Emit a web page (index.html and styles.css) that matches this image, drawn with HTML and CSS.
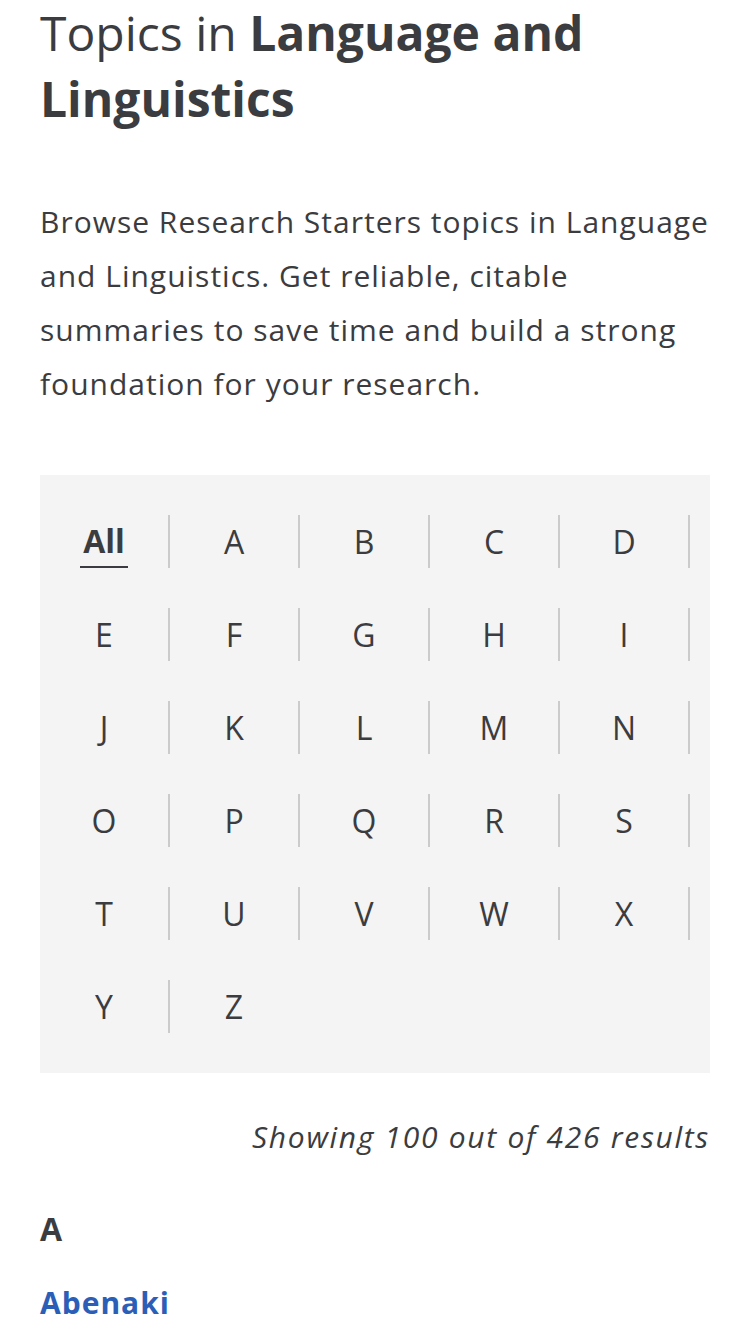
FILE: index.html
```html
<!DOCTYPE html>
<html lang="en">

<head>
    <meta charset="UTF-8">
    <meta name="viewport" content="width=device-width, initial-scale=1.0">
    <title>Topics in Language and Linguistics | Research Starters</title>
    <link rel="stylesheet" href="styles.css">
</head>

<body>
    <div class="container">
        <h1 class="title">Topics in <b>Language and Linguistics</b></h1>

        <p class="intro">Browse Research Starters topics in Language and Linguistics. Get reliable, citable summaries to save time and build a strong foundation for your research.</p>

        <ul class="letters">
            <li><a href="#" class="active">All</a></li>
            <li><a href="#">A</a></li>
            <li><a href="#">B</a></li>
            <li><a href="#">C</a></li>
            <li><a href="#">D</a></li>
            <li><a href="#">E</a></li>
            <li><a href="#">F</a></li>
            <li><a href="#">G</a></li>
            <li><a href="#">H</a></li>
            <li><a href="#">I</a></li>
            <li><a href="#">J</a></li>
            <li><a href="#">K</a></li>
            <li><a href="#">L</a></li>
            <li><a href="#">M</a></li>
            <li><a href="#">N</a></li>
            <li><a href="#">O</a></li>
            <li><a href="#">P</a></li>
            <li><a href="#">Q</a></li>
            <li><a href="#">R</a></li>
            <li><a href="#">S</a></li>
            <li><a href="#">T</a></li>
            <li><a href="#">U</a></li>
            <li><a href="#">V</a></li>
            <li><a href="#">W</a></li>
            <li><a href="#">X</a></li>
            <li><a href="#">Y</a></li>
            <li><a href="#">Z</a></li>
        </ul>

        <p class="count">Showing 100 out of 426 results</p>

        <div class="group">
            <h2>A</h2>
            <a href="#" class="topic">Abenaki</a>
        </div>
    </div>
</body>

</html>
```

FILE: styles.css
```css
body {
    margin: 0;
    background: #fff;
    color: #3b3c40;
    font-family: "Open Sans", "Liberation Sans", sans-serif;
}

.container {
    padding: 0 40px;
}

.title {
    margin: 0;
    font-size: 48px;
    line-height: 66px;
    font-weight: 400;
}

.title b {
    font-weight: 700;
}

.intro {
    margin: 63px 0 0;
    font-size: 30px;
    line-height: 54px;
    letter-spacing: 1px;
}

.letters {
    list-style: none;
    display: grid;
    grid-template-columns: repeat(5, 130px);
    row-gap: 40px;
    margin: 64px 0 0;
    padding: 40px 0;
    background: #f4f4f4;
}

.letters li {
    display: flex;
    justify-content: center;
    height: 53px;
    border-right: 2px solid #cbcbcb;
}

.letters li:last-child {
    border-right: 0;
    padding-right: 2px;
}

.letters a {
    display: flex;
    align-items: center;
    padding: 0 4px;
    color: #3b3c40;
    font-size: 32px;
    text-decoration: none;
}

.letters a.active {
    padding: 0 3px;
    font-weight: 700;
    border-bottom: 2px solid #3b3c40;
    height: 51px;
}

.count {
    margin: 44px 0 0;
    text-align: right;
    font-size: 30px;
    line-height: 40px;
    font-style: italic;
    letter-spacing: 1.7px;
}

.group h2 {
    margin: 52px 0 0;
    font-size: 32px;
    line-height: 40px;
}

.topic {
    display: inline-block;
    margin-top: 34px;
    color: #2b5fb7;
    font-size: 30px;
    line-height: 40px;
    font-weight: 700;
    letter-spacing: 1px;
    text-decoration: none;
}
```
